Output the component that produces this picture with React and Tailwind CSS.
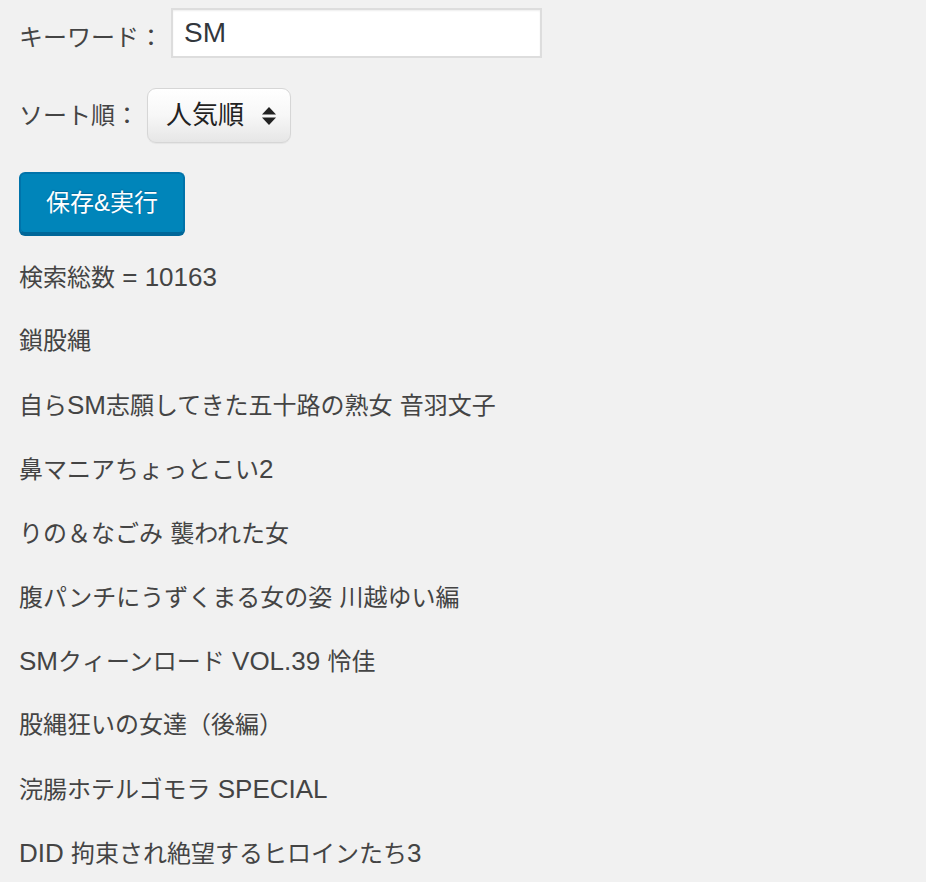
const titles = [
  "鎖股縄",
  "自らSM志願してきた五十路の熟女 音羽文子",
  "鼻マニアちょっとこい2",
  "りの＆なごみ 襲われた女",
  "腹パンチにうずくまる女の姿 川越ゆい編",
  "SMクィーンロード VOL.39 怜佳",
  "股縄狂いの女達（後編）",
  "浣腸ホテルゴモラ SPECIAL",
  "DID 拘束され絶望するヒロインたち3",
];

// latin runs render a bit larger than the kana/kanji, like the mac fallback does
function Mixed({ text }) {
  const parts = text.match(/[\x20-\x7e]+|[^\x20-\x7e]+/g) || [];
  return parts.map((p, i) =>
    /^[\x20-\x7e]+$/.test(p) ? (
      <span key={i} className="text-[26px]">
        {p}
      </span>
    ) : (
      <span key={i}>{p}</span>
    )
  );
}

export default function App() {
  return (
    <div
      className="min-h-[882px] bg-[#f1f1f1] pt-[8px] pl-[19px] text-[24px] text-[#444]"
      style={{ fontFamily: '"Liberation Sans", "Noto Sans CJK JP", sans-serif' }}
    >
      {/* keyword */}
      <div className="flex h-[50px] items-center gap-[8px]">
        <span className="mt-[10px] w-[144px]">キーワード：</span>
        <input
          type="text"
          defaultValue="SM"
          className="h-[50px] w-[371px] border-2 border-[#ddd] bg-white px-[11px] text-[28px] text-[#32373c] shadow-[inset_0_1px_2px_rgba(0,0,0,0.07)] outline-none"
        />
      </div>

      {/* sort */}
      <div className="mt-[30px] flex h-[55px] items-center gap-[8px]">
        <span className="w-[120px]">ソート順：</span>
        <div className="flex h-[55px] w-[144px] items-center justify-between rounded-[9px] border border-[#d6d6d6] bg-gradient-to-b from-white via-[#f7f7f7] to-[#e6e6e6] pl-[18px] pr-[14px] text-[26px] text-[#222] shadow-[inset_0_1px_0_#fff,0_1px_1px_rgba(0,0,0,0.05)]">
          <span>人気順</span>
          <svg width="14" height="18" viewBox="0 0 14 18">
            <path d="M7 0 L14 7.5 L0 7.5 Z" fill="#222" />
            <path d="M0 10.5 L14 10.5 L7 18 Z" fill="#222" />
          </svg>
        </div>
      </div>

      {/* button */}
      <button className="mt-[29px] flex h-[62px] w-[166px] items-center justify-center rounded-[6px] border-2 border-[#0073aa] border-b-[#006799] bg-[#0085ba] text-[24px] text-white shadow-[0_2px_0_#006799] [text-shadow:0_-1px_1px_#006799]">
        保存&amp;実行
      </button>

      {/* results */}
      <div className="mt-[23px] flex flex-col gap-[24px] leading-[40px]">
        <p className="h-[40px] whitespace-nowrap">
          <Mixed text="検索総数 = 10163" />
        </p>
        {titles.map((t) => (
          <p key={t} className="h-[40px] whitespace-nowrap">
            <Mixed text={t} />
          </p>
        ))}
      </div>
    </div>
  );
}
